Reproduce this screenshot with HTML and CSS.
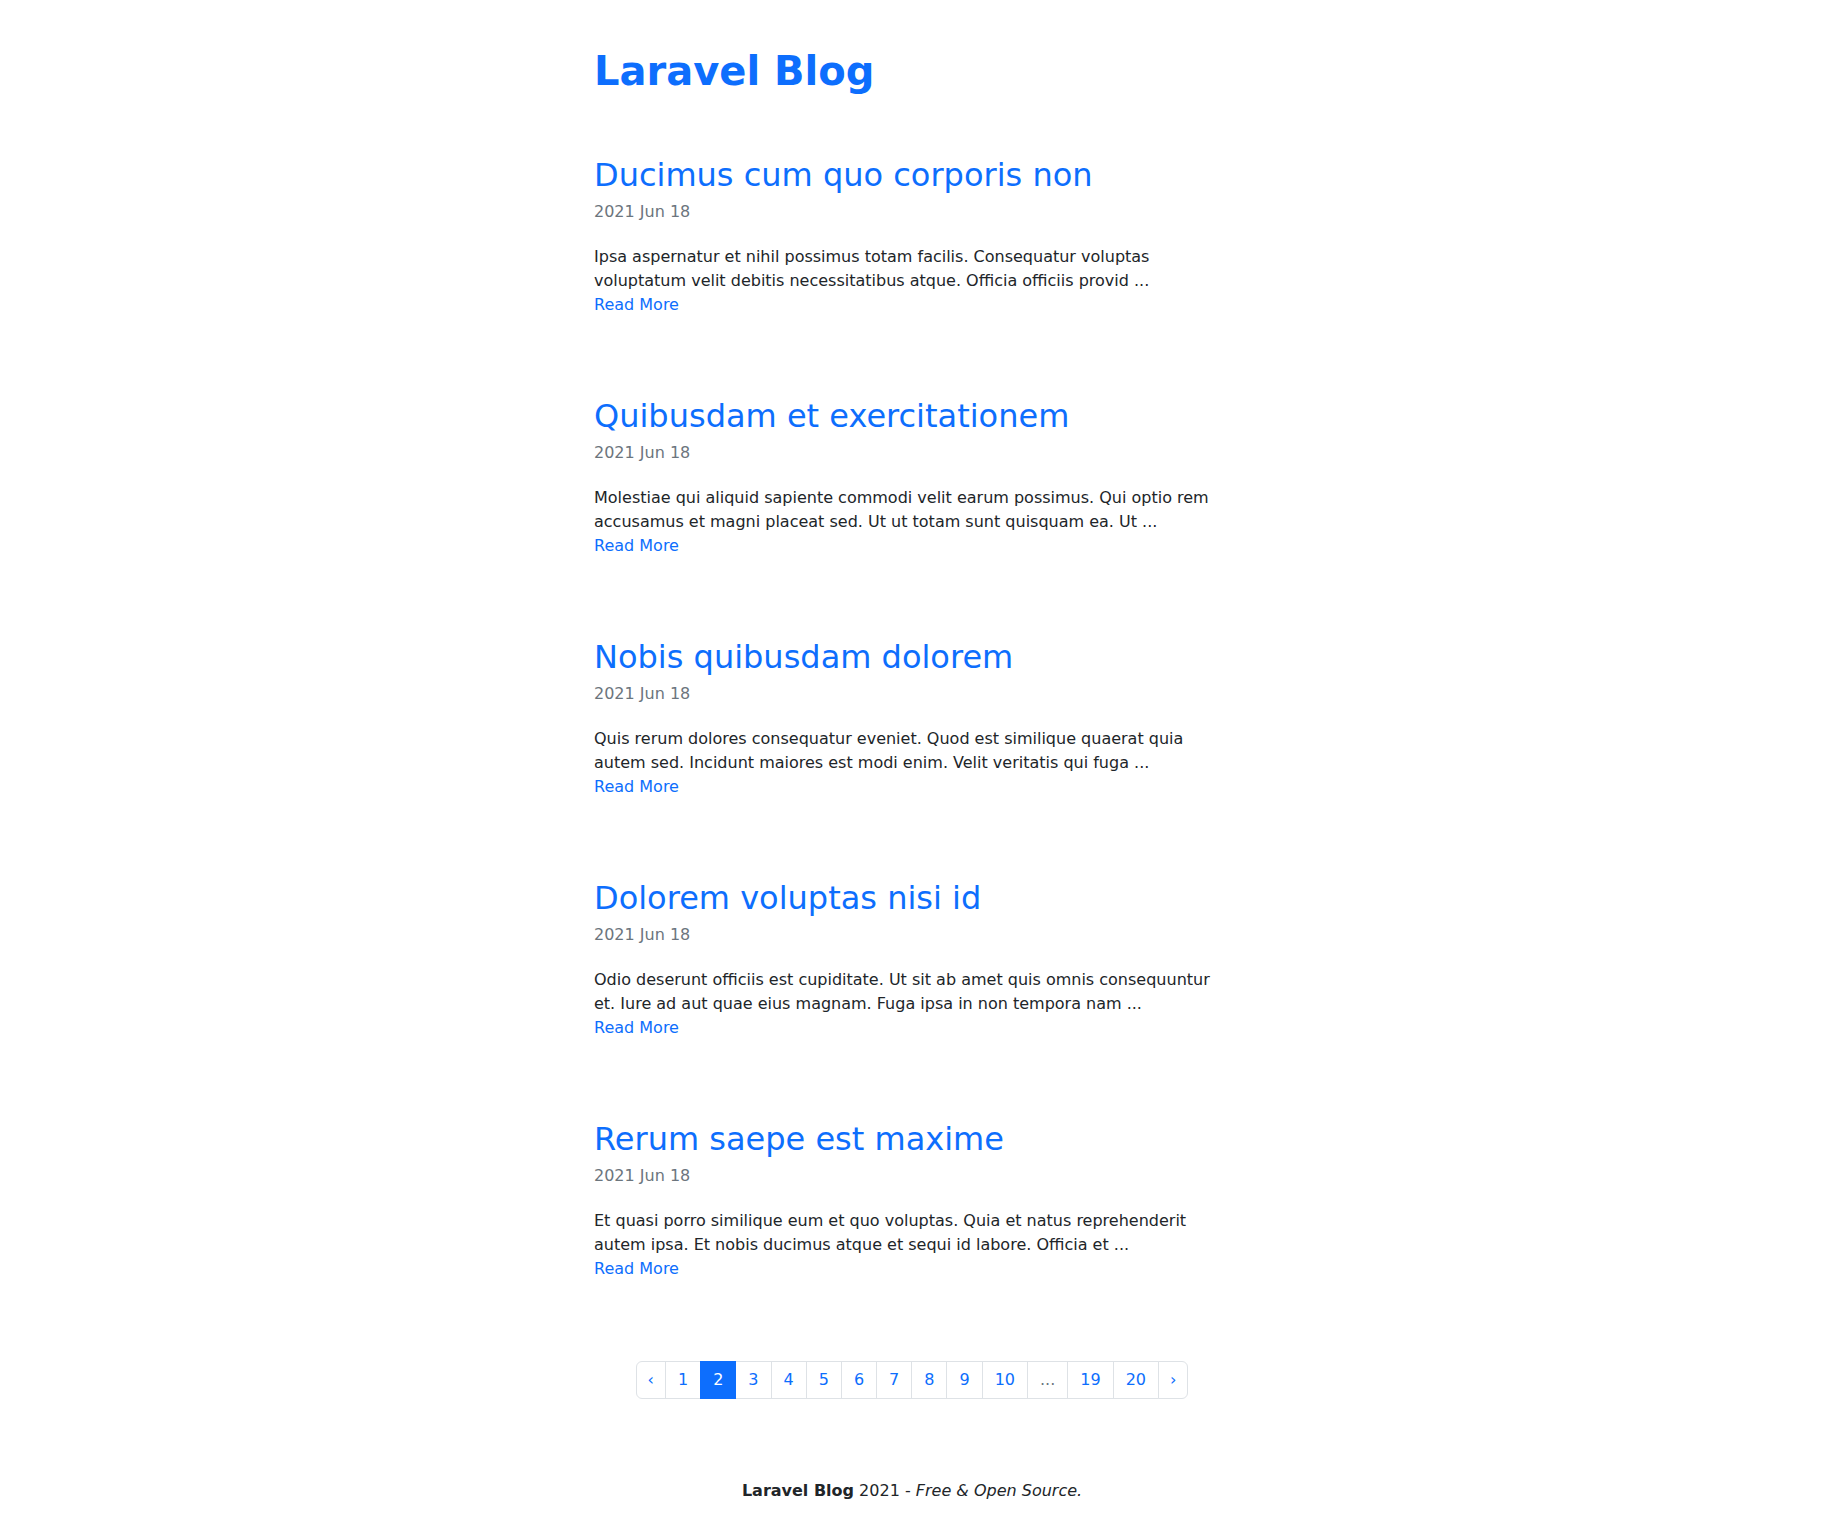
FILE: index.html
```html
<!DOCTYPE html>
<html lang="en">
<head>
<meta charset="utf-8">
<title>Laravel Blog</title>
<link rel="stylesheet" href="styles.css">
</head>
<body>
<main class="page">
  <header class="site-header">
    <h1 class="brand"><a href="#">Laravel Blog</a></h1>
  </header>

  <section class="posts">
    <article class="post">
      <h2 class="post-title"><a href="#">Ducimus cum quo corporis non</a></h2>
      <div class="post-date">2021 Jun 18</div>
      <p class="post-excerpt">Ipsa aspernatur et nihil possimus totam facilis. Consequatur voluptas voluptatum velit debitis necessitatibus atque. Officia officiis provid ...</p>
      <a class="read-more" href="#">Read More</a>
    </article>
    <article class="post">
      <h2 class="post-title"><a href="#">Quibusdam et exercitationem</a></h2>
      <div class="post-date">2021 Jun 18</div>
      <p class="post-excerpt">Molestiae qui aliquid sapiente commodi velit earum possimus. Qui optio rem accusamus et magni placeat sed. Ut ut totam sunt quisquam ea. Ut ...</p>
      <a class="read-more" href="#">Read More</a>
    </article>
    <article class="post">
      <h2 class="post-title"><a href="#">Nobis quibusdam dolorem</a></h2>
      <div class="post-date">2021 Jun 18</div>
      <p class="post-excerpt">Quis rerum dolores consequatur eveniet. Quod est similique quaerat quia autem sed. Incidunt maiores est modi enim. Velit veritatis qui fuga ...</p>
      <a class="read-more" href="#">Read More</a>
    </article>
    <article class="post">
      <h2 class="post-title"><a href="#">Dolorem voluptas nisi id</a></h2>
      <div class="post-date">2021 Jun 18</div>
      <p class="post-excerpt">Odio deserunt officiis est cupiditate. Ut sit ab amet quis omnis consequuntur et. Iure ad aut quae eius magnam. Fuga ipsa in non tempora nam ...</p>
      <a class="read-more" href="#">Read More</a>
    </article>
    <article class="post">
      <h2 class="post-title"><a href="#">Rerum saepe est maxime</a></h2>
      <div class="post-date">2021 Jun 18</div>
      <p class="post-excerpt">Et quasi porro similique eum et quo voluptas. Quia et natus reprehenderit autem ipsa. Et nobis ducimus atque et sequi id labore. Officia et ...</p>
      <a class="read-more" href="#">Read More</a>
    </article>
  </section>

  <nav class="pager">
    <ul class="pagination">
      <li class="page-item page-edge"><a class="page-link" href="#">&lsaquo;</a></li>
      <li class="page-item"><a class="page-link" href="#">1</a></li>
      <li class="page-item active"><span class="page-link">2</span></li>
      <li class="page-item"><a class="page-link" href="#">3</a></li>
      <li class="page-item"><a class="page-link" href="#">4</a></li>
      <li class="page-item"><a class="page-link" href="#">5</a></li>
      <li class="page-item"><a class="page-link" href="#">6</a></li>
      <li class="page-item"><a class="page-link" href="#">7</a></li>
      <li class="page-item"><a class="page-link" href="#">8</a></li>
      <li class="page-item"><a class="page-link" href="#">9</a></li>
      <li class="page-item"><a class="page-link" href="#">10</a></li>
      <li class="page-item disabled"><span class="page-link">...</span></li>
      <li class="page-item"><a class="page-link" href="#">19</a></li>
      <li class="page-item"><a class="page-link" href="#">20</a></li>
      <li class="page-item page-edge"><a class="page-link" href="#">&rsaquo;</a></li>
    </ul>
  </nav>

  <footer class="site-footer">
    <strong>Laravel Blog</strong> 2021 - <em>Free &amp; Open Source.</em>
  </footer>
</main>
</body>
</html>
```

FILE: styles.css
```css
html, body {
  margin: 0;
  padding: 0;
  background: #fff;
}

body {
  font-family: "DejaVu Sans", sans-serif;
  font-size: 16px;
  line-height: 1.5;
  color: #212529;
}

a {
  color: #0d6efd;
  text-decoration: none;
}

.page {
  max-width: 636px;
  margin: 0 auto;
}

.site-header {
  padding-top: 46.5px;
}

.brand {
  margin: 0;
  font-size: 40px;
  font-weight: 700;
  line-height: 1.2;
}

.posts {
  margin-top: 61.2px;
}

.post {
  margin-bottom: 79.6px;
}

.post-title {
  margin: 0 0 6px;
  font-size: 32px;
  font-weight: 400;
  line-height: 1.2;
}

.post-date {
  color: #6c757d;
  margin-bottom: 21px;
}

.post-excerpt {
  margin: 0;
}

.read-more {
  display: block;
  width: max-content;
}

.pager {
  display: flex;
  justify-content: center;
  margin-top: 80px;
}

.pagination {
  display: flex;
  list-style: none;
  margin: 0;
  padding: 0;
}

.page-link {
  display: block;
  padding: 6px 12px;
  border: 1px solid #dee2e6;
  background: #fff;
  color: #0d6efd;
  line-height: 24px;
}

.page-edge .page-link {
  padding: 6px 11px;
}

.page-item + .page-item .page-link {
  margin-left: -1px;
}

.page-item:first-child .page-link {
  border-radius: 6px 0 0 6px;
}

.page-item:last-child .page-link {
  border-radius: 0 6px 6px 0;
}

.page-item.active .page-link {
  background: #0d6efd;
  border-color: #0d6efd;
  color: #fff;
  position: relative;
  z-index: 1;
}

.page-item.disabled .page-link {
  color: #6c757d;
}

.site-footer {
  margin-top: 79.5px;
  text-align: center;
  padding-bottom: 24px;
}
```
